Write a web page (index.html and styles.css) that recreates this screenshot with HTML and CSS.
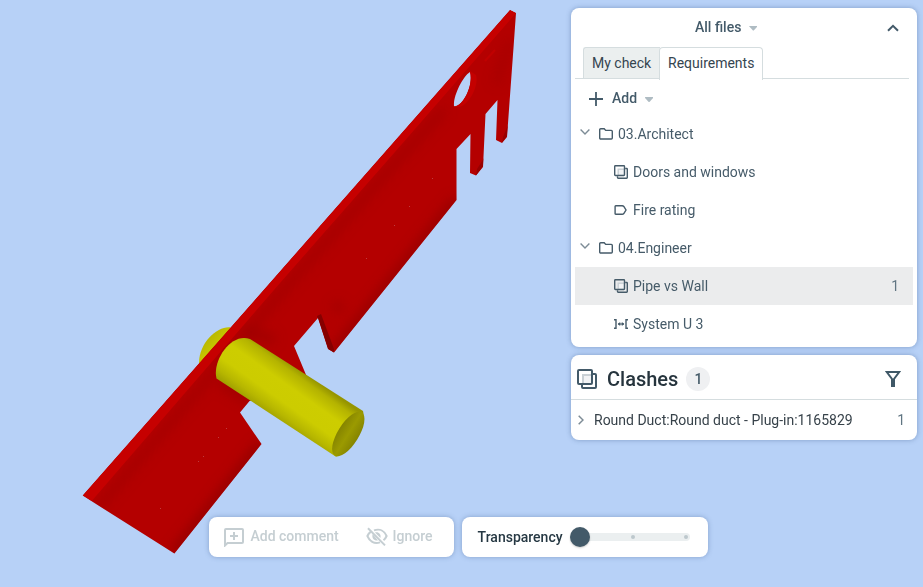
FILE: index.html
```html
<!DOCTYPE html>
<html lang="en">
<head>
<meta charset="utf-8">
<title>Model check</title>
<link rel="stylesheet" href="styles.css">
</head>
<body>
<svg width="0" height="0" class="defs">
  <defs>
    <symbol id="clash" viewBox="0 0 20 20"><path d="M5 5H15V15H5Z" fill="#c9d0d5"/><path d="M7 7H14V14H7Z" fill="#fff" fill-opacity=".75"/><rect x="1" y="1" width="14" height="14" rx="1" fill="none" stroke="currentColor" stroke-width="2"/><path d="M16 5h2a1 1 0 0 1 1 1v12a1 1 0 0 1-1 1H6a1 1 0 0 1-1-1v-2" fill="none" stroke="currentColor" stroke-width="2"/></symbol>
    <symbol id="folder" viewBox="0 0 14 12"><path d="M.7 10V1.7a1 1 0 0 1 1-1h3.5l1.5 1.7h5.6a1 1 0 0 1 1 1V10a1 1 0 0 1-1 1H1.7a1 1 0 0 1-1-1Z" fill="none" stroke="currentColor" stroke-width="1.4"/></symbol>
    <symbol id="down" viewBox="0 0 10 6"><path d="m.6.6 4.4 4.4L9.400.6" fill="none" stroke="currentColor" stroke-width="1.4"/></symbol>
  </defs>
</svg>
<main class="app">
  <svg class="scene" viewBox="0 0 923 587">
    <defs>
      <linearGradient id="pipe" gradientUnits="userSpaceOnUse" x1="306" y1="374" x2="274" y2="419">
        <stop offset="0" stop-color="#969500"/><stop offset=".12" stop-color="#b4b300"/><stop offset=".36" stop-color="#cdcd00"/><stop offset=".65" stop-color="#cccc00"/><stop offset=".85" stop-color="#b7b700"/><stop offset="1" stop-color="#a0a000"/>
      </linearGradient>
      <linearGradient id="back" x1="0" y1="0" x2="1" y2="1"><stop offset="0" stop-color="#a8a700"/><stop offset=".5" stop-color="#cccb00"/></linearGradient>
      <linearGradient id="cap" x1="0" y1="0" x2="0" y2="1"><stop offset="0" stop-color="#858400"/><stop offset=".5" stop-color="#9b9a00"/><stop offset="1" stop-color="#858400"/></linearGradient>
      <filter id="soft" x="-50%" y="-50%" width="200%" height="200%"><feGaussianBlur stdDeviation="6"/></filter>
      <path id="shape" fill-rule="evenodd" d="M510 10 516 13 507 137 502 143 496 140 497.500 100 485.500 114 483 167 476 175.500 470 173 470.500 134 456.500 149V200L334 352.500 328 349 318 318 294 346 309 382 249.500 401 240 412.500 261.500 444 174.400 553.500 82.700 495.600ZM470 72C463 76 453 96 454 106 460 109 474 88 470 72Z"/>
      <clipPath id="cut"><path clip-rule="evenodd" d="M510 10 516 13 507 137 502 143 496 140 497.500 100 485.500 114 483 167 476 175.500 470 173 470.500 134 456.500 149V200L334 352.500 328 349 318 318 294 346 309 382 249.500 401 240 412.500 261.500 444 174.400 553.500 82.700 495.600ZM470 72C463 76 453 96 454 106 460 109 474 88 470 72Z"/></clipPath>
    </defs>
    <path d="M230 327.300C218 326 199 342 199 363L212 370 240 338Z" fill="url(#back)"/>
    <use href="#shape" fill="#b40000"/>
    <g clip-path="url(#cut)">
      <g filter="url(#soft)" fill="none" stroke="#900000">
        <path d="M98 508 283 291 398 160 445 109" stroke-width="8" opacity=".45"/>
        <path d="M174 554 262 444" stroke-width="10" opacity=".9"/>
        <path d="M334 353 457 200" stroke-width="10" opacity=".8"/>
        <path d="M220 382 250 400M243 331 275 340M334 310 342 304" stroke-width="10" opacity=".5"/>
        <path d="M510 40 496 84" stroke-width="8" opacity=".35"/>
      </g>
      <path d="M470 71 476 75C480 88 464 113 454 106 464 104 472 88 470 71Z" fill="#c40000"/>
      <path d="M510 10 516 13 396.700 150 280 283 91.700 501 82.700 495.600Z" fill="#c60000"/>
      <path d="M317 316 321 314 334 349 334 353 328 349Z" fill="#860000"/>
      <path d="M507 136 502 143 503 137 508 125ZM483 166 476 176 477 169 484 158Z" fill="#980000"/>
      <path d="M485 61 495 50" stroke="#c00000" stroke-width="2"/>
    </g>
    <g fill="#c03c3e"><path d="M226 428h1v1h-1zM218 437h1v1h-1zM203 456h1v1h-1zM198 461h1v1h-1zM160 508h1v1h-1zM432 178h1v1h-1zM409 206h1v1h-1zM394 225h1v1h-1zM366 258h1v1h-1z"/></g>
    <path d="M250 339 363 411C367 425 349 454 336 456.700L216.500 378.500C212 361 231 332 250 339Z" fill="url(#pipe)"/>
    <ellipse cx="348.300" cy="434" rx="25.500" ry="10.500" transform="rotate(-58 348.300 434)" fill="url(#cap)"/>
  </svg>

  <div class="workspace">
    <section class="toolbar">
      <div class="bar actions">
        <div class="action comment">
          <svg width="20" height="19" viewBox="0 0 20 19"><path d="M1 17.500V2a1 1 0 0 1 1-1h16a1 1 0 0 1 1 1v12a1 1 0 0 1-1 1H3.500Z" fill="none" stroke="currentColor" stroke-width="2"/><path d="M10 4v8M6 8h8" stroke="currentColor" stroke-width="2"/></svg>
          <span>Add comment</span>
        </div>
        <div class="action ignore">
          <svg width="22" height="20" viewBox="0 0 22 20"><path d="M8 3.400C14 1.300 18.500 4 20.600 9c-.7 1.700-1.700 3.100-3.100 4.200M14 15.400C8 17.500 3.500 14 1.400 9c.7-1.700 1.900-3.300 3.500-4.400" fill="none" stroke="currentColor" stroke-width="2"/><path d="M9 5.600C12.500 4.500 15.500 7.500 14.400 11ZM6.700 7C5.400 11 8 14 12 13.500Z" fill="currentColor"/><path d="M2 1.200 19 18.400" stroke="currentColor" stroke-width="2"/></svg>
          <span>Ignore</span>
        </div>
      </div>
      <div class="bar transparency">
        <span>Transparency</span>
        <div class="slider"><i class="thumb"></i><i class="tick"></i><i class="tick"></i></div>
      </div>
    </section>

    <aside class="side">
      <section class="card checks">
        <header class="files">
          <span class="files-name">All files</span><i class="caret"></i>
          <svg class="collapse" width="12" height="8" viewBox="0 0 12 8"><path d="m1 6.800 5-5 5 5" fill="none" stroke="currentColor" stroke-width="2"/></svg>
        </header>
        <nav class="tabs"><div class="tab">My check</div><div class="tab active">Requirements</div></nav>
        <div class="add">
          <svg width="14" height="14" viewBox="0 0 14 14"><path d="M7 0v14M0 7h14" stroke="currentColor" stroke-width="1.800"/></svg>
          <span>Add</span><i class="caret"></i>
        </div>
        <div class="tree">
          <div class="row"><svg class="chev" width="10" height="6"><use href="#down"/></svg><svg class="folder" width="14" height="12"><use href="#folder"/></svg><span>03.Architect</span></div>
          <div class="row child"><svg class="kind" width="14" height="14"><use href="#clash"/></svg><span>Doors and windows</span></div>
          <div class="row child"><svg class="kind" width="14" height="10" viewBox="0 0 14 10"><path d="M1.700.7h6.500q1 0 1.600.8L12 5 9.800 8.500q-.6.8-1.600.8H1.700a.6.6 0 0 1-.6-.6V1.300a.6.6 0 0 1 .6-.6Z" fill="none" stroke="currentColor" stroke-width="1.400"/></svg><span>Fire rating</span></div>
          <div class="row"><svg class="chev" width="10" height="6"><use href="#down"/></svg><svg class="folder" width="14" height="12"><use href="#folder"/></svg><span>04.Engineer</span></div>
          <div class="row child selected"><svg class="kind" width="14" height="14"><use href="#clash"/></svg><span>Pipe vs Wall</span><b class="count">1</b></div>
          <div class="row child"><svg class="kind" width="14" height="10" viewBox="0 0 14 10"><path d="M0 .7h2v8.600H0M14 .7h-2v8.600h2" fill="none" stroke="currentColor" stroke-width="1.400"/><path d="M4 5h6" stroke="currentColor" stroke-width="1.200"/><path d="M3.700 5 6.200 2.900v4.200ZM10.300 5 7.800 2.900v4.200Z" fill="currentColor"/></svg><span>System U 3</span></div>
        </div>
      </section>
      <section class="card results">
        <header class="heading">
          <svg class="clash" width="20" height="20"><use href="#clash"/></svg>
          <h1>Clashes</h1><span class="pill">1</span>
          <svg class="filter" width="16" height="16" viewBox="0 0 16 16"><path d="M1.800 1h12.400L9 8v7H7V8Z" fill="none" stroke="currentColor" stroke-width="2"/></svg>
        </header>
        <div class="result"><svg width="6" height="10" viewBox="0 0 6 10"><path d="m.7.7 4.300 4.300L.7 9.300" fill="none" stroke="currentColor" stroke-width="1.500"/></svg><span>Round Duct:Round duct - Plug-in:1165829</span><b class="count">1</b></div>
      </section>
    </aside>
  </div>
</main>
</body>
</html>
```
FILE: styles.css
```css
* { box-sizing: border-box; }
body { margin: 0; font: 14px/20px Roboto, sans-serif; color: #465b69; background: #b7d1f7; overflow: hidden; }
svg { display: block; flex: none; }
.defs { position: absolute; }
.app { display: grid; width: 923px; height: 587px; }
.scene { grid-area: 1 / 1; width: 923px; height: 587px; }
.workspace { grid-area: 1 / 1; position: relative; display: flex; justify-content: flex-end; padding: 8px 6px 0 0; }
.toolbar { position: absolute; left: 209px; bottom: 30px; display: flex; gap: 8px; }
.bar { display: flex; align-items: center; height: 40px; background: #fff; border-radius: 8px; box-shadow: 0 0 5px rgba(60, 90, 140, .4); }
.actions { width: 245px; padding-left: 15px; color: #c5ced2; font-weight: 500; }
.action { display: flex; align-items: center; }
.action span { margin-top: -2px; }
.comment { width: 142px; gap: 6.5px; }
.ignore { gap: 4.5px; }
.transparency { width: 246px; padding-left: 15.6px; color: #263843; font-weight: 500; }
.slider { display: flex; align-items: center; width: 120px; height: 8px; margin-left: 7.4px; border-radius: 4px; background: #ebeff0; }
.thumb { width: 20px; height: 20px; border-radius: 50%; background: #435a69; box-shadow: 0 1px 2px rgba(0, 0, 0, .2); }
.tick { width: 4px; height: 4px; margin-left: 41px; border-radius: 50%; background: #bdc8cd; }
.tick + .tick { margin-left: 49.5px; }
.side { width: 346px; display: flex; flex-direction: column; gap: 8px; }
.card { background: #fff; border-radius: 8px; box-shadow: 0 0 5px rgba(60, 90, 140, .45); }
.checks { height: 339px; padding: 0 4px; }
.files { display: flex; align-items: center; height: 39px; padding-left: 120px; padding-right: 14px; color: #435a69; font-weight: 500; }
.files-name { margin-top: -2px; }
.caret { width: 8px; height: 5px; background: #afbcc3; clip-path: polygon(0 0, 100% 0, 100% 20%, 55% 100%, 45% 100%, 0 20%); margin-left: 8px; margin-top: 1px; }
.collapse { margin-left: auto; }
.tabs { display: flex; align-items: flex-end; height: 32px; padding-left: 8px; margin-right: 4px; border-bottom: 1px solid #d5dddf; }
.tab { width: 77px; height: 31px; padding: 5px 0 0 8px; border: 1px solid #d5dddf; border-radius: 3px 0 0 0; border-bottom: 0; border-right: 0; background: #ebefef; color: #35454f; white-space: nowrap; }
.tab.active { width: 104px; height: 33px; padding-top: 5px; margin: 0 0 -2px -1px; border-radius: 4px 4px 0 0; border-right: 1px solid #d5dddf; background: #fff; }
.add { display: flex; align-items: center; height: 38px; padding: 2px 0 0 14px; color: #435a69; font-weight: 500; }
.add span { margin: -2px 0 0 9px; }
.add svg { margin-top: -1px; }
.tree { margin-top: -2px; }
.row { display: flex; align-items: center; height: 38px; padding-left: 5px; }
.chev { margin-top: -4px; color: #7d8c96; }
.folder { margin: 0 5px 0 9px; }
.child { padding-left: 39px; }
.kind { margin-right: 5px; }
.selected { background: #ebeced; }
.count { margin-left: auto; font-weight: 400; padding-right: 14px; color: #607582; }
.results { height: 85px; }
.heading { display: flex; align-items: center; height: 45px; padding: 3px 16px 0 6px; border-bottom: 1px solid #d5dddf; }
.clash { color: #435a69; }
h1 { margin: 0 0 0 10px; font-size: 20px; line-height: 24px; font-weight: 500; color: #26343d; }
.pill { width: 24px; height: 24px; margin-left: 8px; border-radius: 50%; background: #eff0f2; text-align: center; line-height: 24px; font-weight: 500; }
.filter { margin-left: auto; color: #3f5867; }
.result { display: flex; align-items: center; height: 40px; padding-left: 7px; color: #37424a; }
.result svg { color: #7d8c96; margin-right: 10px; margin-top: -1px; }
.result .count { padding-right: 12px; }
```
